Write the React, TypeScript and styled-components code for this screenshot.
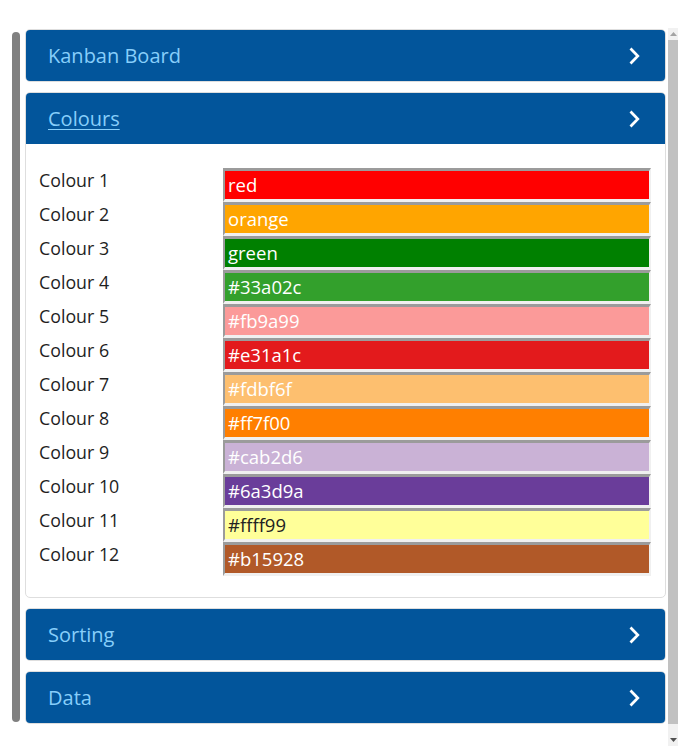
import React from "react";
import styled, { createGlobalStyle } from "styled-components";

const Global = createGlobalStyle`
  html, body { margin: 0; padding: 0; background: #fff; }
  body { font-family: "Open Sans", "Liberation Sans", sans-serif; overflow: hidden; }
`;

const Page = styled.div`
  display: flex;
  height: 746px;
  padding-top: 28px;
  box-sizing: border-box;
`;

const Main = styled.div`
  flex: 1;
  display: flex;
  gap: 5px;
  padding-left: 12px;
  padding-right: 2px;
`;

const SideBar = styled.div`
  width: 8px;
  margin-top: 4px;
  height: 690px;
  background: #808080;
  border-radius: 4px;
`;

const Panels = styled.div`
  flex: 1;
  display: flex;
  flex-direction: column;
  gap: 10px;
  padding-top: 1px;
`;

const Card = styled.div`
  border: 1px solid #dedede;
  border-radius: 5px;
  background: #fff;
  overflow: hidden;
`;

const Header = styled.div`
  height: 51px;
  background: #02559b;
  display: flex;
  align-items: center;
  justify-content: space-between;
  padding: 0 24px 0 22px;
  box-sizing: border-box;
`;

const Title = styled.span<{ $active?: boolean }>`
  color: #87cefa;
  font-size: 20px;
  text-decoration: ${(p) => (p.$active ? "underline" : "none")};
  text-underline-offset: 3px;
  text-decoration-thickness: 1px;
`;

const Body = styled.div`
  padding: 24px 14px 21px 13px;
  display: grid;
  grid-template-columns: 184px 1fr;
`;

const Label = styled.div`
  font-size: 17.8px;
  color: #1e1e1e;
  line-height: 24px;
  height: 34px;
`;

const Swatch = styled.div<{ $bg: string; $fg: string }>`
  height: 34px;
  box-sizing: border-box;
  border-top: 3px solid #9b9b9b;
  border-left: 2px solid #9b9b9b;
  border-bottom: 3px solid #f0f0f0;
  border-right: 2px solid #f0f0f0;
  background: ${(p) => p.$bg};
  background-clip: padding-box;
  color: ${(p) => p.$fg};
  font-size: 18.5px;
  line-height: 28px;
  padding-left: 3px;
`;

const ScrollBar = styled.div`
  width: 10px;
  display: flex;
  flex-direction: column;
  background: #f1f1f1;
`;

const Arrow = styled.div`
  height: 12px;
  display: flex;
  align-items: center;
  justify-content: center;
`;

const Thumb = styled.div`
  flex: 1;
  background: #c1c1c1;
  margin: 0 0 10px 0;
`;

const Chevron = () => (
  <svg width="14" height="18" viewBox="0 0 14 18">
    <path d="M3.5 1.5 L10.8 9 L3.5 16.5" fill="none" stroke="#fff" strokeWidth="2.7" />
  </svg>
);

const colours: string[] = [
  "red",
  "orange",
  "green",
  "#33a02c",
  "#fb9a99",
  "#e31a1c",
  "#fdbf6f",
  "#ff7f00",
  "#cab2d6",
  "#6a3d9a",
  "#ffff99",
  "#b15928",
];

const Section = ({ title, active, children }: { title: string; active?: boolean; children?: React.ReactNode }) => (
  <Card>
    <Header>
      <Title $active={active}>{title}</Title>
      <Chevron />
    </Header>
    {children}
  </Card>
);

export default function App() {
  return (
    <>
      <Global />
      <Page>
        <Main>
          <SideBar />
          <Panels>
            <Section title="Kanban Board" />
            <Section title="Colours" active>
              <Body>
                {colours.map((c, i) => (
                  <React.Fragment key={i}>
                    <Label>Colour {i + 1}</Label>
                    <Swatch $bg={c} $fg={c === "#ffff99" ? "#222" : "#fff"}>
                      {c}
                    </Swatch>
                  </React.Fragment>
                ))}
              </Body>
            </Section>
            <Section title="Sorting" />
            <Section title="Data" />
          </Panels>
        </Main>
        <ScrollBar>
          <Arrow>
            <svg width="7" height="4" viewBox="0 0 7 4"><path d="M0 4 L3.5 0 L7 4Z" fill="#a3a3a3" /></svg>
          </Arrow>
          <Thumb />
          <Arrow>
            <svg width="7" height="4" viewBox="0 0 7 4"><path d="M0 0 L3.5 4 L7 0Z" fill="#505050" /></svg>
          </Arrow>
        </ScrollBar>
      </Page>
    </>
  );
}
